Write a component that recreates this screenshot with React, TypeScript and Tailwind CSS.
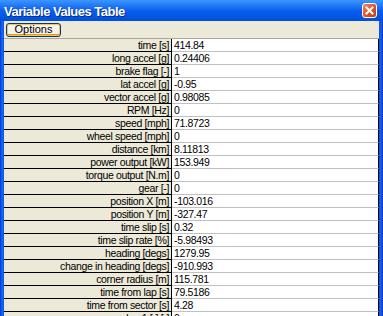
import React from 'react';

const rows: [string, string][] = [
  ['time [s]', '414.84'],
  ['long accel [g]', '0.24406'],
  ['brake flag [-]', '1'],
  ['lat accel [g]', '-0.95'],
  ['vector accel [g]', '0.98085'],
  ['RPM [Hz]', '0'],
  ['speed [mph]', '71.8723'],
  ['wheel speed [mph]', '0'],
  ['distance [km]', '8.11813'],
  ['power output [kW]', '153.949'],
  ['torque output [N.m]', '0'],
  ['gear [-]', '0'],
  ['position X [m]', '-103.016'],
  ['position Y [m]', '-327.47'],
  ['time slip [s]', '0.32'],
  ['time slip rate [%]', '-5.98493'],
  ['heading [degs]', '1279.95'],
  ['change in heading [degs]', '-910.993'],
  ['corner radius [m]', '115.781'],
  ['time from lap [s]', '79.5186'],
  ['time from sector [s]', '4.28'],
  ['lap 1 [-] [-]', '0'],
];

function CloseButton() {
  return (
    <div className="w-[15px] h-[15px] rounded-[3px] border border-white bg-gradient-to-br from-[#f08a66] via-[#e0542a] to-[#c23c14] flex items-center justify-center">
      <svg width="9" height="9" viewBox="0 0 9 9">
        <path d="M1.5 1.5 L7.5 7.5 M7.5 1.5 L1.5 7.5" stroke="white" strokeWidth="2" strokeLinecap="square" />
      </svg>
    </div>
  );
}

export default function App() {
  return (
    <div
      className="w-[383px] h-[316px] overflow-hidden flex flex-col bg-[#0054e3]"
      style={{ fontFamily: '"Liberation Sans", Arial, sans-serif' }}
    >
      {/* title bar */}
      <div className="h-[21px] shrink-0 flex items-center justify-between pl-[4px] pr-[6px] bg-gradient-to-b from-[#3d95ff] via-[#0a5ef0] to-[#0050d8]">
        <span className="text-white font-bold text-[13px] tracking-[-0.5px] [text-shadow:1px_1px_0_#0a2a8a] leading-none pt-[1px]">
          Variable Values Table
        </span>
        <CloseButton />
      </div>

      <div className="flex-1 flex min-h-0">
        <div className="w-[4px] shrink-0 bg-gradient-to-r from-[#0831d9] via-[#1a68f0] to-[#0a55e6]" />

        <div className="flex-1 flex flex-col min-w-0 bg-[#ece9d8]">
          {/* toolbar */}
          <div className="h-[18px] shrink-0 flex items-center pl-[2px] border-b border-[#aca899]">
            <button className="w-[55px] h-[14px] rounded-[3px] border border-[#003c74] bg-[#f4f3ee] shadow-[inset_0_0_0_1px_#f8c160,inset_0_-1px_0_1px_#e59a1a] flex items-center justify-center text-[11px] leading-none text-black">
              Options
            </button>
          </div>

          {/* table */}
          <div className="flex flex-col text-[10.5px] tracking-[-0.35px] text-black leading-none">
            {rows.map(([label, value]) => (
              <div key={label} className="flex h-[13px] shrink-0">
                <div className="w-[168px] shrink-0 border-b border-r border-black bg-[#ece9d8] flex items-center justify-end pr-[2px] whitespace-nowrap">
                  {label}
                </div>
                <div className="flex-1 border-b border-b-[#c0c0c0] border-r border-r-black bg-white flex items-center pl-[2px]">
                  {value}
                </div>
              </div>
            ))}
          </div>
        </div>

        <div className="w-[4px] shrink-0 bg-gradient-to-r from-[#0a55e6] via-[#1a5fe0] to-[#0831d9]" />
      </div>
    </div>
  );
}
